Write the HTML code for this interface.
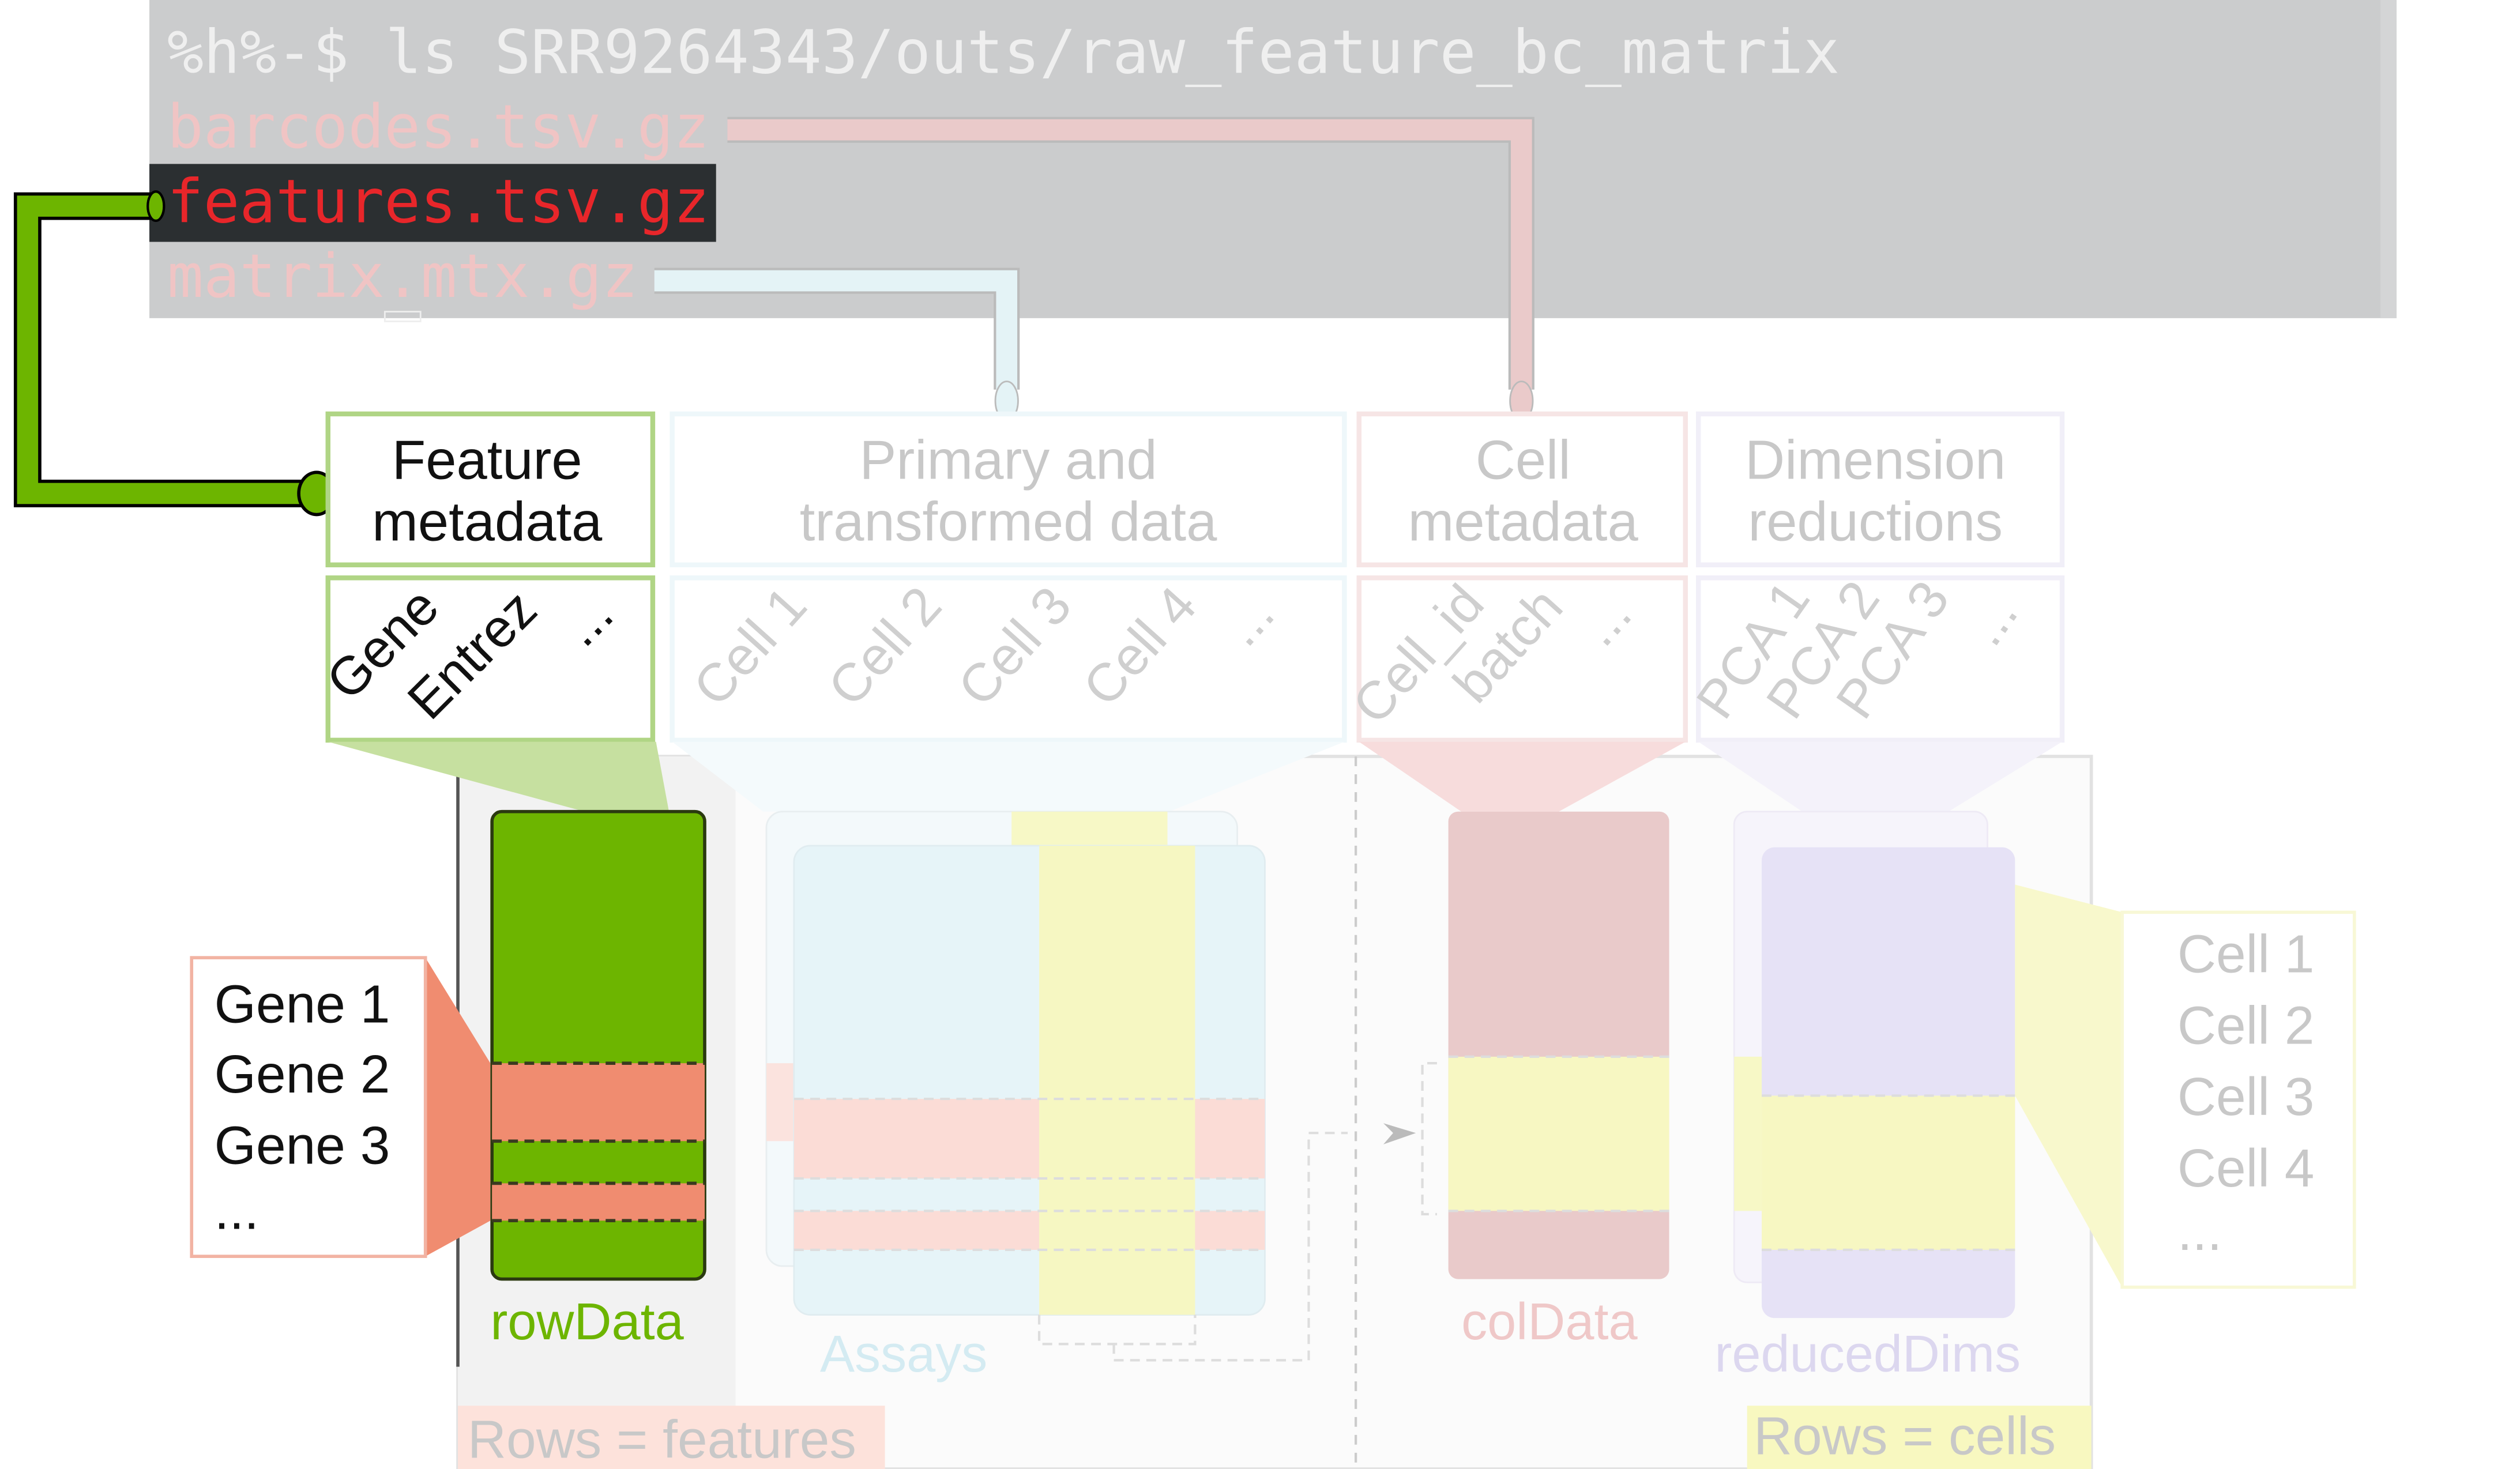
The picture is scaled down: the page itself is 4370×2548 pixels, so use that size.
<!DOCTYPE html>
<html><head><meta charset="utf-8"><style>
html,body{margin:0;padding:0;background:#fff;}
svg{display:block;}
.mono{font-family:"DejaVu Sans Mono","Liberation Mono",monospace;}
.sans{font-family:"Liberation Sans",Arial,sans-serif;}
</style></head><body>
<svg width="4370" height="2548" viewBox="0 0 1552 905" preserveAspectRatio="none" xmlns="http://www.w3.org/2000/svg">
<rect width="1552" height="905" fill="#fff"/>
<!-- terminal -->
<rect x="92" y="0" width="1384" height="196" fill="#cbcccd"/>
<rect x="1466" y="0" width="10" height="196" fill="#d4d5d6"/>
<text class="mono" x="103" y="45" font-size="37" fill="#efefef" textLength="1030" lengthAdjust="spacingAndGlyphs">%h%-$ ls SRR9264343/outs/raw_feature_bc_matrix</text>
<text class="mono" x="103" y="91" font-size="37" fill="#f0c4c4" textLength="334" lengthAdjust="spacingAndGlyphs">barcodes.tsv.gz</text>
<rect x="92" y="101" width="349" height="48" fill="#2b2f31"/>
<text class="mono" x="103" y="137" font-size="37" fill="#e8262a" textLength="334" lengthAdjust="spacingAndGlyphs">features.tsv.gz</text>
<text class="mono" x="103" y="183" font-size="37" fill="#f0c4c4" textLength="290" lengthAdjust="spacingAndGlyphs">matrix.mtx.gz</text>
<rect x="237" y="192" width="22" height="6" fill="none" stroke="#eee" stroke-width="1"/>

<!-- connectors -->
<path d="M448,80 H937 V240" fill="none" stroke="#bbb" stroke-width="16" stroke-linejoin="miter"/>
<path d="M448,80 H937 V240" fill="none" stroke="#eacaca" stroke-width="13"/>
<ellipse cx="937" cy="247" rx="7" ry="12" fill="#eacaca" stroke="#bbb" stroke-width="1"/>
<path d="M403,173 H620 V240" fill="none" stroke="#bbb" stroke-width="16"/>
<path d="M403,173 H620 V240" fill="none" stroke="#e4f3f6" stroke-width="13"/>
<ellipse cx="620" cy="247" rx="7" ry="12" fill="#e4f3f6" stroke="#bbb" stroke-width="1"/>
<path d="M96,127 H17 V304 H190" fill="none" stroke="#000" stroke-width="17"/>
<path d="M96,127 H17 V304 H190" fill="none" stroke="#6db500" stroke-width="13"/>
<ellipse cx="195" cy="304" rx="11" ry="13" fill="#6db500" stroke="#000" stroke-width="2"/>
<ellipse cx="96" cy="127" rx="5" ry="9" fill="#6db500" stroke="#000" stroke-width="1.5"/>

<!-- header boxes -->
<g fill="#fff" stroke-width="3">
<rect x="202" y="255" width="200" height="93" stroke="#b0d585"/>
<rect x="414" y="255" width="414" height="93" stroke="#eef7fa"/>
<rect x="837" y="255" width="201" height="93" stroke="#f6e5e5"/>
<rect x="1046" y="255" width="224" height="93" stroke="#f1eff8"/>
<rect x="202" y="356" width="200" height="100" stroke="#b0d585"/>
<rect x="414" y="356" width="414" height="100" stroke="#eef7fa"/>
<rect x="837" y="356" width="201" height="100" stroke="#f6e5e5"/>
<rect x="1046" y="356" width="224" height="100" stroke="#f1eff8"/>
</g>
<g class="sans" font-size="34" text-anchor="middle">
<text x="300" y="295" fill="#111">Feature</text>
<text x="300" y="333" fill="#111">metadata</text>
<text x="621" y="295" fill="#c8c8c8">Primary and</text>
<text x="621" y="333" fill="#c8c8c8">transformed data</text>
<text x="938" y="295" fill="#c8c8c8">Cell</text>
<text x="938" y="333" fill="#c8c8c8">metadata</text>
<text x="1155" y="295" fill="#c8c8c8">Dimension</text>
<text x="1155" y="333" fill="#c8c8c8">reductions</text>
</g>
<g class="sans" font-size="33">
<text transform="translate(215,433) rotate(-45)" fill="#111">Gene</text>
<text transform="translate(265,445) rotate(-45)" fill="#111">Entrez</text>
<text transform="translate(360,400) rotate(-45)" fill="#111">...</text>
<g fill="#cfcfcf">
<text transform="translate(442,437) rotate(-48)">Cell 1</text>
<text transform="translate(525,437) rotate(-48)">Cell 2</text>
<text transform="translate(605,437) rotate(-48)">Cell 3</text>
<text transform="translate(682,437) rotate(-48)">Cell 4</text>
<text transform="translate(768,400) rotate(-48)">...</text>
<text transform="translate(848,448) rotate(-48)">Cell_id</text>
<text transform="translate(910,435) rotate(-48)">batch</text>
<text transform="translate(988,400) rotate(-48)">...</text>
<text transform="translate(1062,445) rotate(-55)">PCA 1</text>
<text transform="translate(1105,445) rotate(-55)">PCA 2</text>
<text transform="translate(1148,445) rotate(-55)">PCA 3</text>
<text transform="translate(1228,400) rotate(-55)">...</text>
</g>
</g>

<!-- bottom area -->
<rect x="282" y="466" width="1006" height="439" fill="#fbfbfb" stroke="#e2e2e2" stroke-width="2"/>
<rect x="282" y="466" width="171" height="414" fill="#f2f2f2"/>
<line x1="282" y1="466" x2="282" y2="842" stroke="#555" stroke-width="2"/>
<line x1="835" y1="466" x2="835" y2="905" stroke="#ccc" stroke-width="1.5" stroke-dasharray="6,5"/>
<!-- triangles -->
<polygon points="202,457 404,457 412,500 360,500" fill="#c6e0a0"/>
<polygon points="414,457 828,457 720,500 470,500" fill="#f4fafc"/>
<polygon points="837,457 1038,457 960,500 900,500" fill="#f7dcdc"/>
<polygon points="1046,457 1270,457 1200,500 1110,500" fill="#f4f2fa"/>
<!-- rowData -->
<rect x="303" y="500" width="131" height="288" rx="6" fill="#6db500" stroke="#2b3a10" stroke-width="2"/>
<rect x="303" y="655" width="131" height="48" fill="#f08c70"/>
<rect x="303" y="729" width="131" height="23" fill="#f08c70"/>
<g stroke="#3a3a20" stroke-width="2" stroke-dasharray="6,4">
<line x1="303" y1="655" x2="434" y2="655"/><line x1="303" y1="703" x2="434" y2="703"/>
<line x1="303" y1="729" x2="434" y2="729"/><line x1="303" y1="752" x2="434" y2="752"/>
</g>
<text class="sans" x="302" y="825" font-size="32" fill="#6db500">rowData</text>
<!-- gene box -->
<polygon points="262,590 302,655 302,752 262,774" fill="#f08c70"/>
<rect x="118" y="590" width="144" height="184" fill="#fff" stroke="#f2b3a3" stroke-width="2"/>
<g class="sans" font-size="33" fill="#111">
<text x="132" y="630">Gene 1</text><text x="132" y="673">Gene 2</text><text x="132" y="717">Gene 3</text><text x="132" y="757">...</text>
</g>
<!-- assays -->
<rect x="472" y="500" width="290" height="280" rx="10" fill="#f3f9fb" stroke="#e8eef0"/>
<rect x="623" y="500" width="96" height="22" fill="#f7f8c6"/>
<rect x="472" y="655" width="18" height="48" fill="#fbe3de"/>
<rect x="489" y="521" width="290" height="289" rx="10" fill="#e6f4f8" stroke="#e0ecf0"/>
<rect x="489" y="677" width="290" height="49" fill="#fbdcd6"/>
<rect x="489" y="746" width="290" height="24" fill="#fbdcd6"/>
<rect x="640" y="521" width="96" height="289" fill="#f6f7c2"/>
<g stroke="#ddd" stroke-width="1.5" stroke-dasharray="6,4" fill="none">
<line x1="489" y1="677" x2="779" y2="677"/><line x1="489" y1="726" x2="779" y2="726"/>
<line x1="489" y1="746" x2="779" y2="746"/><line x1="489" y1="770" x2="779" y2="770"/>
<path d="M640,810 V828 H736 V810"/><path d="M686,828 V838 H806 V698 H830"/>
<path d="M885,655 H876 V748 H885"/>
</g>
<polygon points="852,692 872,698 852,705 858,698" fill="#bbb"/>
<text class="sans" x="505" y="845" font-size="32" fill="#d4ebf2">Assays</text>
<!-- colData -->
<rect x="892" y="500" width="136" height="288" rx="6" fill="#e9caca"/>
<rect x="892" y="651" width="136" height="95" fill="#f7f7c2"/>
<g stroke="#ddd" stroke-width="1.5" stroke-dasharray="6,4"><line x1="892" y1="651" x2="1028" y2="651"/><line x1="892" y1="746" x2="1028" y2="746"/></g>
<text class="sans" x="900" y="825" font-size="32" fill="#efc8c8">colData</text>
<!-- reducedDims -->
<rect x="1068" y="500" width="156" height="290" rx="8" fill="#f6f4fb" stroke="#eeeaf5"/>
<rect x="1068" y="651" width="18" height="95" fill="#f7f8c6"/>
<rect x="1085" y="522" width="156" height="290" rx="8" fill="#e6e2f6"/>
<rect x="1085" y="675" width="156" height="95" fill="#f7f7c2"/>
<g stroke="#ddd" stroke-width="1.5" stroke-dasharray="6,4"><line x1="1085" y1="675" x2="1241" y2="675"/><line x1="1085" y1="770" x2="1241" y2="770"/></g>
<text class="sans" x="1056" y="845" font-size="32" fill="#dcd7ef">reducedDims</text>
<!-- cells box -->
<polygon points="1241,545 1307,562 1307,793 1241,675" fill="#f8f8cc"/>
<rect x="1307" y="562" width="143" height="231" fill="#fff" stroke="#f8f8d6" stroke-width="2"/>
<g class="sans" font-size="33" fill="#c8c8c8">
<text x="1341" y="599">Cell 1</text><text x="1341" y="643">Cell 2</text><text x="1341" y="687">Cell 3</text><text x="1341" y="731">Cell 4</text><text x="1341" y="770">...</text>
</g>
<!-- rows labels -->
<rect x="282" y="866" width="263" height="39" fill="#fde2db"/>
<text class="sans" x="288" y="898" font-size="33" fill="#c8c8c8">Rows = features</text>
<rect x="1076" y="866" width="212" height="39" fill="#f8f8c0"/>
<text class="sans" x="1080" y="896" font-size="33" fill="#c8c8c8">Rows = cells</text>
</svg>
</body></html>
